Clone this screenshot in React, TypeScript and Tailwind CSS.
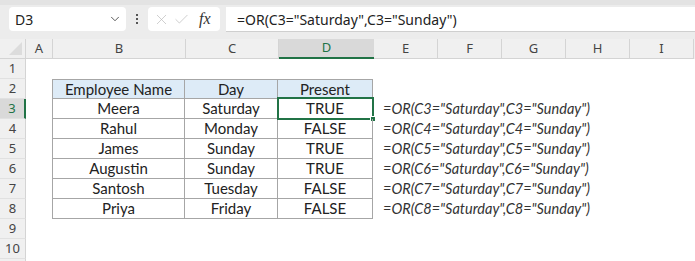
import { ChevronDown, X, Check } from 'lucide-react'

const cols = [
  { name: 'A', w: 'w-[27px]' },
  { name: 'B', w: 'w-[133px]' },
  { name: 'C', w: 'w-[93px]' },
  { name: 'D', w: 'w-[95px]' },
  { name: 'E', w: 'w-[64px]' },
  { name: 'F', w: 'w-[64px]' },
  { name: 'G', w: 'w-[64px]' },
  { name: 'H', w: 'w-[64px]' },
  { name: 'I', w: 'w-[64px]' },
]

const rows = [
  ['Meera', 'Saturday', 'TRUE'],
  ['Rahul', 'Monday', 'FALSE'],
  ['James', 'Sunday', 'TRUE'],
  ['Augustin', 'Sunday', 'TRUE'],
  ['Santosh', 'Tuesday', 'FALSE'],
  ['Priya', 'Friday', 'FALSE'],
]

const cellFont = { fontFamily: 'Lato, "Open Sans", sans-serif' }
const uiFont = { fontFamily: '"Noto Sans", "Open Sans", sans-serif' }

function RowHead({ n, active }: { n?: number; active?: boolean }) {
  return (
    <div
      className={`w-[26px] h-[20px] shrink-0 flex items-center justify-center text-[13px] leading-none border-b border-[#e1e1e1] ${
        active
          ? 'bg-[#d9d9d9] text-[#217346] border-r-2 border-r-[#217346]'
          : 'bg-[#f0f0f0] text-[#444] border-r border-r-[#d4d4d4]'
      }`}
      style={uiFont}
    >
      {n}
    </div>
  )
}

export default function App() {
  return (
    <div className="w-[695px] h-[261px] overflow-hidden bg-white">
      {/* formula bar */}
      <div className="h-[39px] bg-[#ececec] border-t-[5px] border-[#e3e3e3] flex items-start pt-[2px] pl-[9px]" style={uiFont}>
        <div className="w-[117px] h-[24px] bg-white rounded-[4px] flex items-center justify-between pl-[6px] pr-[4px] text-[14px] text-[#222]">
          <span>D3</span>
          <ChevronDown size={14} strokeWidth={1.5} className="text-[#444]" />
        </div>
        <div className="w-[22px] h-[24px] flex flex-col items-center justify-center gap-[2px]">
          <span className="w-[2px] h-[2px] bg-[#555]" />
          <span className="w-[2px] h-[2px] bg-[#555]" />
          <span className="w-[2px] h-[2px] bg-[#555]" />
        </div>
        <div className="w-[72px] h-[24px] bg-white rounded-[4px] flex items-center pl-[5px] gap-[3px]">
          <X size={17} strokeWidth={1} className="text-[#bbb]" />
          <Check size={17} strokeWidth={1} className="text-[#bbb]" />
          <span
            className="ml-[6px] text-[16px] italic text-[#333]"
            style={{ fontFamily: '"Liberation Serif", serif' }}
          >
            fx
          </span>
        </div>
        <div className="ml-[6px] flex-1 h-[25px] bg-white border-b border-[#cfcfcf] flex items-center pl-[11px] text-[14px] text-[#222]">
          =OR(C3="Saturday",C3="Sunday")
        </div>
      </div>

      {/* column headers */}
      <div className="flex h-[20px] bg-[#f0f0f0]" style={uiFont}>
        <div className="w-[26px] h-[20px] shrink-0 border-r border-b border-[#d4d4d4] flex items-end justify-end p-[3px]">
          <div className="w-0 h-0 border-l-[13px] border-l-transparent border-b-[13px] border-b-[#dcdcdc]" />
        </div>
        {cols.map((c) => (
          <div
            key={c.name}
            className={`${c.w} shrink-0 h-[20px] flex items-center justify-center text-[13px] ${
              c.name === 'D'
                ? 'bg-[#d9d9d9] text-[#217346] border-b-2 border-[#217346]'
                : 'text-[#444] border-r border-[#d4d4d4] border-b border-b-[#d4d4d4]'
            }`}
          >
            {c.name}
          </div>
        ))}
      </div>

      {/* row 1 */}
      <div className="flex h-[20px]">
        <RowHead n={1} />
      </div>

      {/* row 2 header */}
      <div className="flex h-[20px] text-[15px] leading-none text-[#222]" style={cellFont}>
        <RowHead n={2} />
        <div className="w-[26px] shrink-0" />
        <div className="w-[133px] h-[20px] shrink-0 bg-[#ddebf7] border border-[#a6a6a6] flex items-center justify-center">
          Employee Name
        </div>
        <div className="w-[93px] h-[20px] shrink-0 bg-[#ddebf7] border-y border-r border-[#a6a6a6] flex items-center justify-center">
          Day
        </div>
        <div className="w-[95px] h-[20px] shrink-0 bg-[#ddebf7] border-y border-r border-[#a6a6a6] flex items-center justify-center">
          Present
        </div>
      </div>

      {rows.map((r, i) => (
        <div key={i} className="flex h-[20px] text-[15px] leading-none text-[#222]" style={cellFont}>
          <RowHead n={i + 3} active={i === 0} />
          <div className="w-[26px] shrink-0" />
          <div className="w-[133px] h-[20px] shrink-0 border-x border-b border-[#a6a6a6] flex items-center justify-center">
            {r[0]}
          </div>
          <div className="w-[93px] h-[20px] shrink-0 border-r border-b border-[#a6a6a6] flex items-center justify-center">
            {r[1]}
          </div>
          <div className="relative w-[95px] h-[20px] shrink-0 border-r border-b border-[#a6a6a6] flex items-center justify-center">
            {r[2]}
            {i === 0 && (
              <>
                <div className="absolute left-[-1px] top-[-2px] right-[-2px] bottom-[-2px] border-2 border-[#217346]" />
                <div className="absolute right-[-4px] bottom-[-4px] w-[6px] h-[6px] bg-[#217346] border border-white" />
              </>
            )}
          </div>
          <div className="h-[20px] pl-[10px] flex items-center italic text-[14.5px] text-[#333] whitespace-nowrap">
            =OR(C{i + 3}="Saturday",C{i + 3}="Sunday")
          </div>
        </div>
      ))}

      <div className="flex h-[20px]">
        <RowHead n={9} />
      </div>
      <div className="flex h-[20px]">
        <RowHead n={10} />
      </div>
      <div className="flex h-[20px]">
        <RowHead />
      </div>
    </div>
  )
}
